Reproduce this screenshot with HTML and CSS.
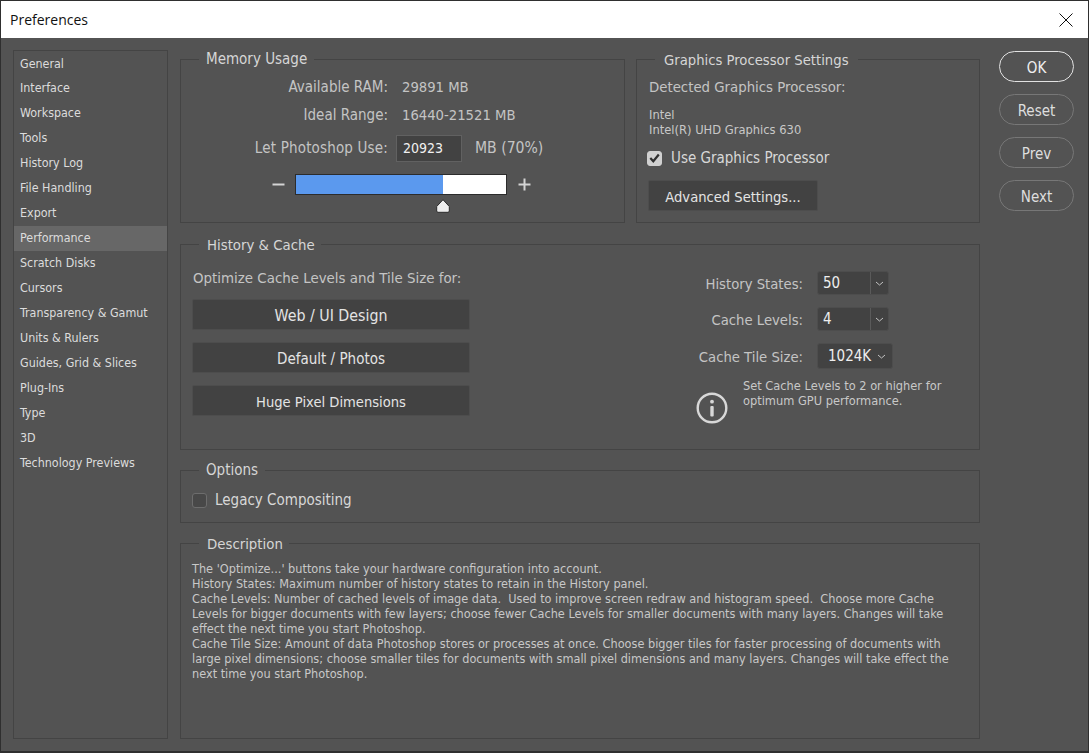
FILE: index.html
```html
<!DOCTYPE html>
<html lang="en">
<head>
<meta charset="utf-8">
<title>Preferences</title>
<link rel="stylesheet" href="styles.css">
</head>
<body>
<div class="window">
  <header class="titlebar">
    <span class="title">Preferences</span>
    <svg class="close" width="14" height="14" viewBox="0 0 14 14"><path d="M.5.5l13 13M13.500.5l-13 13" stroke="#111" stroke-width="1" fill="none"/></svg>
  </header>
  <div class="body">
    <nav class="sidebar">
      <a class="nav-item">General</a>
      <a class="nav-item">Interface</a>
      <a class="nav-item">Workspace</a>
      <a class="nav-item">Tools</a>
      <a class="nav-item">History Log</a>
      <a class="nav-item">File Handling</a>
      <a class="nav-item">Export</a>
      <a class="nav-item active">Performance</a>
      <a class="nav-item">Scratch Disks</a>
      <a class="nav-item">Cursors</a>
      <a class="nav-item">Transparency &amp; Gamut</a>
      <a class="nav-item">Units &amp; Rulers</a>
      <a class="nav-item">Guides, Grid &amp; Slices</a>
      <a class="nav-item">Plug-Ins</a>
      <a class="nav-item">Type</a>
      <a class="nav-item">3D</a>
      <a class="nav-item">Technology Previews</a>
    </nav>
    <main class="content">
      <div class="top-row">
        <fieldset class="group memory">
          <legend>Memory Usage</legend>
          <div class="mem-grid">
            <span class="label">Available RAM:</span><span class="value">29891 MB</span>
            <span class="label">Ideal Range:</span><span class="value">16440-21521 MB</span>
            <span class="label let">Let Photoshop Use:</span>
            <span class="use"><span class="input">20923</span><span class="value pct">MB (70%)</span></span>
          </div>
          <div class="slider-row">
            <span class="sign">
              <svg width="13" height="13" viewBox="0 0 13 13"><path d="M.5 6.500h12" stroke="#d4d4d4" stroke-width="2"/></svg>
            </span>
            <div class="slider-wrap">
              <div class="slider"><div class="slider-fill" style="width:70%"></div></div>
              <svg class="thumb" width="14" height="14" viewBox="0 0 14 14"><path d="M7 .7L13.300 7.500V12Q13.300 13.300 12 13.300H2Q.7 13.300 .7 12V7.500Z" fill="#eee" stroke="#2c2c2c" stroke-width="1"/></svg>
            </div>
            <span class="sign">
              <svg width="13" height="13" viewBox="0 0 13 13"><path d="M.5 6.500h12M6.500.5v12" stroke="#d4d4d4" stroke-width="2"/></svg>
            </span>
          </div>
        </fieldset>
        <fieldset class="group gpu">
          <legend>Graphics Processor Settings</legend>
          <div class="label detected">Detected Graphics Processor:</div>
          <div class="small gpu-name">Intel<br>Intel(R) UHD Graphics 630</div>
          <label class="check-row">
            <span class="check checked"><svg width="11" height="10" viewBox="0 0 11 10"><path d="M1.300 5l3 3.300L9.800 1.500" fill="none" stroke="#2f2f2f" stroke-width="2.200"/></svg></span>
            <span class="label-strong">Use Graphics Processor</span>
          </label>
          <button class="btn adv">Advanced Settings...</button>
        </fieldset>
      </div>
      <fieldset class="group cache">
        <legend>History &amp; Cache</legend>
        <div class="cache-cols">
          <div class="cache-left">
            <div class="label opt">Optimize Cache Levels and Tile Size for:</div>
            <button class="btn wide web">Web / UI Design</button>
            <button class="btn wide">Default / Photos</button>
            <button class="btn wide huge">Huge Pixel Dimensions</button>
          </div>
          <div class="cache-right">
            <div class="sel-row">
              <span class="label">History States:</span>
              <span class="select"><span class="sel-val">50</span><span class="sel-arrow"><svg width="9" height="5" viewBox="0 0 9 5"><path d="M1 1l3.500 3L8 1" fill="none" stroke="#c4c4c4"/></svg></span></span>
            </div>
            <div class="sel-row">
              <span class="label">Cache Levels:</span>
              <span class="select"><span class="sel-val">4</span><span class="sel-arrow"><svg width="9" height="5" viewBox="0 0 9 5"><path d="M1 1l3.500 3L8 1" fill="none" stroke="#c4c4c4"/></svg></span></span>
            </div>
            <div class="sel-row tile">
              <span class="label">Cache Tile Size:</span>
              <span class="select plain"><span class="sel-val">1024K</span><svg width="9" height="5" viewBox="0 0 9 5"><path d="M1 1l3.500 3L8 1" fill="none" stroke="#c4c4c4"/></svg></span>
            </div>
            <div class="note">
              <svg class="info" width="32" height="32" viewBox="0 0 32 32"><circle cx="16" cy="16" r="14.300" fill="none" stroke="#d8d8d8" stroke-width="2.400"/><rect x="14.300" y="14" width="3.400" height="10.500" rx="1" fill="#d8d8d8"/><circle cx="16" cy="9.700" r="1.900" fill="#d8d8d8"/></svg>
              <div class="small note-text">Set Cache Levels to 2 or higher for<br>optimum GPU performance.</div>
            </div>
          </div>
        </div>
      </fieldset>
      <fieldset class="group options">
        <legend>Options</legend>
        <label class="check-row">
          <span class="check"></span>
          <span class="label-strong">Legacy Compositing</span>
        </label>
      </fieldset>
      <fieldset class="group description">
        <legend>Description</legend>
        <p class="small desc">The 'Optimize...' buttons take your hardware configuration into account.<br>History States: Maximum number of history states to retain in the History panel.<br>Cache Levels: Number of cached levels of image data.&nbsp; Used to improve screen redraw and histogram speed.&nbsp; Choose more Cache<br>Levels for bigger documents with few layers; choose fewer Cache Levels for smaller documents with many layers. Changes will take<br>effect the next time you start Photoshop.<br>Cache Tile Size: Amount of data Photoshop stores or processes at once. Choose bigger tiles for faster processing of documents with<br>large pixel dimensions; choose smaller tiles for documents with small pixel dimensions and many layers. Changes will take effect the<br>next time you start Photoshop.</p>
      </fieldset>
    </main>
    <aside class="actions">
      <button class="pill primary">OK</button>
      <button class="pill">Reset</button>
      <button class="pill">Prev</button>
      <button class="pill">Next</button>
    </aside>
  </div>
</div>
</body>
</html>
```
FILE: styles.css
```css
* { box-sizing: border-box; }
html, body { margin: 0; padding: 0; height: 100%; }
body {
  font-family: "DejaVu Sans", "Liberation Sans", sans-serif;
  font-stretch: condensed;
  background: #535353;
  overflow: hidden;
}
.window {
  width: 1089px;
  height: 753px;
  border: 1px solid #2f2f2f;
  border-bottom-width: 2px;
  display: flex;
  flex-direction: column;
  background: #535353;
}
.titlebar {
  height: 37px;
  flex: none;
  background: #fff;
  display: flex;
  align-items: center;
  justify-content: space-between;
  padding: 0 15px 0 9px;
}
.title { font: 14px "Open Sans", sans-serif; color: #111; }
.body {
  flex: 1;
  display: flex;
  align-items: flex-start;
  padding: 12px 0 0 12px;
}
.sidebar {
  width: 155px;
  height: 689px;
  flex: none;
  border: 1px solid #444;
  display: flex;
  flex-direction: column;
  font-size: 12.4px;
  color: #dcdcdc;
}
.nav-item {
  height: 25px;
  line-height: 24px;
  padding-left: 6px;
  flex: none;
}
.nav-item:first-child { line-height: 26px; }
.nav-item.active { background: #676767; }
.content {
  width: 800px;
  margin: 1px 0 0 12px;
  display: flex;
  flex-direction: column;
  gap: 12px;
}
.top-row { display: flex; gap: 11px; height: 173px; align-items: flex-start; }
.group {
  margin: 0;
  padding: 0;
  min-width: 0;
  border: 1px solid #444;
}
legend {
  margin-left: 18px;
  padding: 0 7px;
  font-size: 15px;
  line-height: 17px;
  color: #d6d6d6;
}
.cache legend, .description legend { padding: 0 6px 0 8px; font-size: 14.8px; }
.label { font-size: 15px; color: #c4c4c4; white-space: nowrap; }
.let { letter-spacing: .17px; }
.value { font-size: 14.7px; color: #c4c4c4; white-space: nowrap; }
.value.pct { font-size: 15.6px; }
.label-strong { font-size: 15px; color: #d8d8d8; white-space: nowrap; }
.small { font-size: 12.6px; line-height: 15px; color: #c8c8c8; white-space: nowrap; }
.memory { width: 445px; height: 172px; }
.mem-grid {
  display: grid;
  grid-template-columns: 207px auto;
  column-gap: 14px;
  align-items: center;
  justify-content: start;
  grid-template-rows: 28px 28px 38px;
  margin-top: 5px;
}
.mem-grid .label { text-align: right; }
.mem-grid > .value { padding-bottom: 2px; }
.use { display: flex; align-items: center; gap: 13px; margin-left: -6px; }
.input {
  width: 66px;
  height: 27px;
  background: #424242;
  border: 1px solid #616161;
  color: #f0f0f0;
  font-size: 14px;
  line-height: 25px;
  padding-left: 6px;
}
.slider-row {
  display: flex;
  align-items: flex-start;
  margin: 7px 0 0 80px;
}
.sign { width: 34px; height: 21px; display: flex; align-items: center; justify-content: center; }
.slider-wrap { width: 212px; }
.slider {
  height: 21px;
  border: 1px solid #2c2c2c;
  background: #fff;
}
.slider-fill { height: 100%; background: #5b99ee; }
.thumb { display: block; margin: 4px 0 0 141px; }
.gpu { width: 344px; height: 172px; padding-left: 12px; }
.gpu legend { margin-left: 6px; padding: 0 9px; font-size: 14.7px; }
.detected { margin-top: 9px; line-height: 20px; font-size: 14.8px; }
.gpu-name { margin-top: 10px; font-size: 12.8px; }
.check-row { display: flex; align-items: center; gap: 8px; }
.gpu .check-row { margin-top: 12px; margin-left: -2px; }
.gpu .label-strong { margin-left: 1px; }
.check {
  width: 15px;
  height: 15px;
  border-radius: 3px;
  border: 1px solid #6d6d6d;
  background: #484848;
  display: flex;
  align-items: center;
  justify-content: center;
}
.check.checked { background: #d0d0d0; border-color: #d0d0d0; }
.btn {
  display: block;
  font: inherit;
  font-stretch: condensed;
  font-size: 15px;
  color: #e4e4e4;
  background: #424242;
  border: 1px solid #4d4d4d;
  border-radius: 2px;
  padding: 2px 0 0;
}
.adv { width: 170px; height: 31px; margin: 13px 0 0 -1px; font-size: 14.6px; padding-top: 1px; }
.cache { height: 214px; }
.cache-cols { display: flex; }
.cache-left { width: 515px; padding-left: 11px; }
.opt { margin: 15px 0 -1px 1px; line-height: 20px; font-size: 14.9px; }
.wide { width: 278px; height: 31px; margin-top: 12px; }
.web { font-size: 15.8px; padding-top: 1px; }
.huge { font-size: 14.6px; padding-top: 1px; }
.cache-right { flex: 1; padding-top: 18px; }
.sel-row {
  display: flex;
  align-items: center;
  height: 24px;
  margin-bottom: 12px;
  width: 193px;
  justify-content: flex-end;
  gap: 14px;
}
.sel-row .label { font-size: 14.7px; }
.select {
  width: 72px;
  height: 24px;
  display: flex;
  background: #424242;
  border: 1px solid #4d4d4d;
  border-radius: 3px;
  color: #eee;
  font-size: 15px;
  align-items: center;
}
.sel-val { flex: 1; padding-left: 5px; }
.sel-arrow {
  width: 18px;
  height: 100%;
  border-left: 1px solid #5a5a5a;
  display: flex;
  align-items: center;
  justify-content: center;
}
.tile { height: 26px; margin-bottom: 0; width: 197px; }
.select.plain { width: 76px; height: 26px; padding-right: 6px; }
.plain .sel-val { padding-left: 10px; }
.note { display: flex; align-items: flex-start; margin-top: 8px; }
.info { margin: 15px 15px 0 0; flex: none; }
.note-text { margin-top: 1px; font-size: 12.7px; }
.options { height: 61px; }
.options .check-row { padding-left: 11px; margin-top: 12px; }
.description { height: 204px; }
.desc { margin: 0; padding: 9px 0 0 11px; }
.actions {
  display: flex;
  flex-direction: column;
  gap: 12px;
  margin: 1px 0 0 19px;
  width: 75px;
}
.pill {
  height: 31px;
  font: inherit;
  font-stretch: condensed;
  font-size: 15px;
  color: #dedede;
  background: transparent;
  border: 1px solid #777;
  border-radius: 16px;
  padding: 3px 0 0;
}
.pill.primary { border-color: #e2e2e2; color: #f0f0f0; }
```
